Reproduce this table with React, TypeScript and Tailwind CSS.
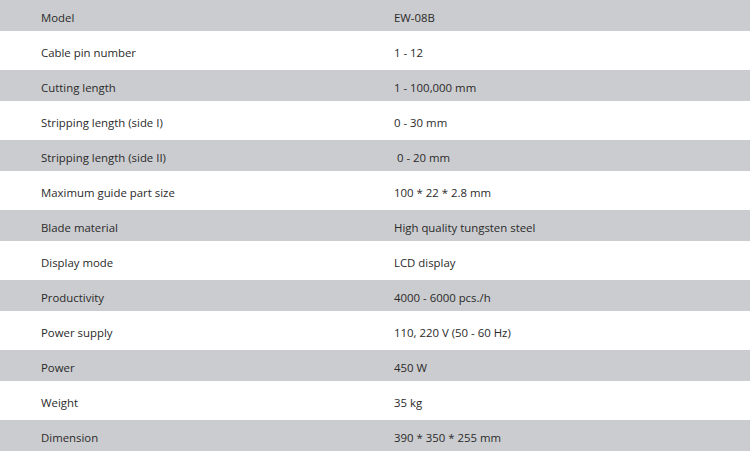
import React from "react";

const rows: [string, string][] = [
  ["Model", "EW-08B"],
  ["Cable pin number", "1 - 12"],
  ["Cutting length", "1 - 100,000 mm"],
  ["Stripping length (side I)", "0 - 30 mm"],
  ["Stripping length (side II)", "\u00a00 - 20 mm"],
  ["Maximum guide part size", "100 * 22 * 2.8 mm"],
  ["Blade material", "High quality tungsten steel"],
  ["Display mode", "LCD display"],
  ["Productivity", "4000 - 6000 pcs./h"],
  ["Power supply", "110, 220 V (50 - 60 Hz)"],
  ["Power", "450 W"],
  ["Weight", "35 kg"],
  ["Dimension", "390 * 350 * 255 mm"],
];

export default function App() {
  return (
    <div
      className="w-[750px] h-[451px] overflow-hidden bg-white text-[#2a2a2a] text-[11.4px]"
      style={{ fontFamily: '"Open Sans", sans-serif' }}
    >
      {rows.map(([k, v], i) => (
        <div
          key={k}
          className={
            i % 2 === 0
              ? "grid grid-cols-[394px_1fr] items-center h-[31px] pt-[4px] bg-[#cbcccf]"
              : "grid grid-cols-[394px_1fr] items-center h-[39px] pt-[4px] bg-white"
          }
        >
          <div className="pl-[41px] whitespace-nowrap">{k}</div>
          <div className="whitespace-pre">{v}</div>
        </div>
      ))}
    </div>
  );
}
